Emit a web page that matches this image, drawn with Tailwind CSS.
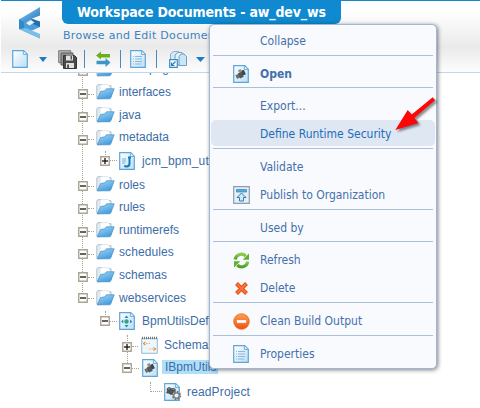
<!DOCTYPE html>
<html lang="en">
<head>
<meta charset="utf-8">
<title>Workspace Documents</title>
<script src="https://cdn.jsdelivr.net/npm/@tailwindcss/browser@4"></script>
</head>
<body class="bg-white">
<svg width="0" height="0" class="absolute">
  <defs>
    <linearGradient id="paper" x1="0" y1="0" x2="1" y2="1"><stop offset="0" stop-color="#fff"/><stop offset="1" stop-color="#b9dff5"/></linearGradient>
    <linearGradient id="fold" x1="0" y1="0" x2="0.6" y2="1"><stop offset="0" stop-color="#a5d8f7"/><stop offset="1" stop-color="#439cdc"/></linearGradient>
    <linearGradient id="blue" x1="0" y1="0" x2="1" y2="1"><stop offset="0" stop-color="#8fd0f5"/><stop offset="1" stop-color="#2275bb"/></linearGradient>
    <linearGradient id="orange" x1="0" y1="0" x2="0" y2="1"><stop offset="0" stop-color="#ffa04d"/><stop offset="1" stop-color="#ef4f0d"/></linearGradient>
    <linearGradient id="green" x1="0" y1="0" x2="0" y2="1"><stop offset="0" stop-color="#8dcc4d"/><stop offset="1" stop-color="#4c9f27"/></linearGradient>
    <symbol id="page" viewBox="0 0 16 18"><path d="M.7.7h11l3.6 3.6v13H.7z" fill="url(#paper)" stroke="#5fa5d6" stroke-width="1.2"/><path d="M11.4 1v3.5H15" fill="#d8effb" stroke="#69abd9" stroke-width=".9"/></symbol>
    <symbol id="textpage" viewBox="0 0 16 18"><use href="#page"/><path d="M3 6.5h1M5 6.5h7M3 9h1M5 9h7M3 11.5h1M5 11.5h7M3 14h1M5 14h6" stroke="#8ab9da" stroke-width="1"/></symbol>
    <symbol id="cubes" viewBox="0 0 14 11"><path d="M4 0l4 1.5v4L4 7 1 5V2zM10 1l3.5 1.8v3.4L11 8 8 6.5v-4zM6.500 5l3.500 1.500v3L7 11 3.500 9V7zM1.500 5.500L4 7v2L1.500 9 0 7.500z" fill="#4d5357"/><path d="M4 1.500l2 1-2 1-1.500-1zM10.500 2.500l1.500.7-1.500 1-1.500-1z" fill="#a3abb0"/></symbol>
    <symbol id="service" viewBox="0 0 16 18"><use href="#page"/><g transform="rotate(-25 7.500 9.500)"><rect x="2.500" y="8" width="5" height="4" fill="#6b7073"/><rect x="8" y="6.500" width="4.500" height="5" fill="#3f4447"/><rect x="5.500" y="7.500" width="4" height="5.500" fill="#53585b"/><rect x="7" y="4.500" width="3" height="3" fill="#8c9295"/></g></symbol>
    <symbol id="folder" viewBox="0 0 19 16"><path d="M.8 2l1-1.300h4l1.200 1h8v11l-13 2.300-1.200-1z" fill="#e6edf2" stroke="#9bb2c2" stroke-width=".8"/><path d="M4 .8l8-.3 2 2v6H4z" fill="#fff" stroke="#c3cfd7" stroke-width=".5"/><path d="M1.200 14.800L4.600 7.500l4.200-.7 1.600-2h7.800l-3.400 9q-.4 1-1.500 1z" fill="url(#fold)" stroke="#3a8fcb" stroke-width=".7"/></symbol>
    <symbol id="minus" viewBox="0 0 10 10"><path d="M.75.75h8.500v8.500H.75z" fill="#fff" stroke="#aca592" stroke-width="1.400"/><path d="M2 5h6" stroke="#111" stroke-width="1.300"/></symbol>
    <symbol id="plus" viewBox="0 0 10 10"><use href="#minus"/><path d="M5 2v6" stroke="#111" stroke-width="1.300"/></symbol>
  </defs>
</svg>
<div class="relative h-[408px] w-[480px] overflow-hidden bg-white font-['Liberation_Sans',Arial,sans-serif] text-[12px] text-[#3c6da8]">

  <header class="relative z-10 ml-px flex h-[73px] border-t border-b border-t-[#1686cc] border-b-[#c2d7e9] bg-linear-to-b from-white from-15% via-[#eaeaea] via-65% to-[#fdfdfd]">
    <div class="absolute top-[5px] left-[17px]">
      <svg width="24" height="34" viewBox="0 0 24 34"><path d="M22 1v8.500l-9 3.500-4 3H1v-2.500z" fill="url(#blue)"/><path d="M1 13.500L9 16l4-3.500 9 3.500v5l-9 4 9 4v3.500L1 23z" fill="#4b9fd8"/><path d="M1 13.500l5 2.500v6.500l3 2.500-8-2z" fill="#3388c8"/><path d="M13 12.500l9 3v5.500l-8-3.500z" fill="#256fae"/><path d="M1 23l7-1 14 6v4.500z" fill="#78bee9"/><path d="M8 17l5-3 3.500 2.500-5 3z" fill="#e8f5fc"/></svg>
    </div>
    <div class="flex w-full flex-col">
      <div class="ml-[61px] flex h-[23px] w-[279px] items-center rounded-b-[6px] bg-[#0f89cf] pl-[15px] font-['DejaVu_Sans_Condensed','DejaVu_Sans',sans-serif] text-[14px] font-bold whitespace-nowrap text-white"><span class="tracking-[-0.15px]">Workspace Documents - aw_dev_ws</span></div>
      <div class="ml-[62px] flex h-[23px] items-center pt-px font-['DejaVu_Sans',Verdana,sans-serif] text-[11px] tracking-[0.3px] whitespace-nowrap text-[#3e81c0]">Browse and Edit Documents</div>
      <div class="flex h-[24px] items-center pl-[11px]">
        <svg width="16" height="18"><use href="#page"/></svg>
        <svg class="ml-[11px]" width="8" height="5"><path d="M0 0h8L4 5z" fill="#187dc4"/></svg>
        <svg class="ml-[11px]" width="19" height="19" viewBox="0 0 19 19"><path d="M.7.700h12v12h-12z" fill="#b8b8b8" stroke="#777"/><path d="M3 3h12v12H3z" fill="#929292" stroke="#5d5d5d"/><path d="M5.500 5.500h11l2 2v11h-13z" fill="#4b4b4b" stroke="#353535"/><path d="M8 5.500h7v5H8zM8 13h8v5H8z" fill="#e1e1e1"/><path d="M12.500 6h1.500v3.500h-1.500zM9 14.500h2v3.500H9z" fill="#555"/></svg>
        <i class="ml-[7px] h-[18px] w-px bg-[#4d87bb]"></i>
        <svg class="ml-[11px]" width="15" height="16" viewBox="0 0 15 16"><path d="M0 4.500L5 .5v2.500h9v3.500H5v2z" fill="#6bb01c"/><path d="M14.500 11.500L9.500 7v2.700H.500v3.500h9V16z" fill="#3d96c8"/></svg>
        <i class="ml-[9px] h-[18px] w-px bg-[#4d87bb]"></i>
        <svg class="ml-[9px]" width="16" height="18"><use href="#textpage"/></svg>
        <i class="ml-[10px] h-[18px] w-px bg-[#4d87bb]"></i>
        <svg class="ml-[12px]" width="18" height="18" viewBox="0 0 18 18"><path d="M1.500 11V4l3-2.500h5V11z" fill="#d9eaf4" stroke="#7fb0cf"/><path d="M6 15V5l3-2.500h4l2 2V15z" fill="#e5f2fa" stroke="#6aa0c2"/><path d="M10 15.500V6.500L12 4h3l2.500 2.500v9z" fill="#cae5f5" stroke="#6aa0c2"/><path d="M.7 9.700h7.600v7.600H.7z" fill="#fff" stroke="#3b8dc1" stroke-width="1.200"/><path d="M6.500 11.500l-4 4M2.500 12.500v3h3" fill="none" stroke="#2581bd" stroke-width="1.200"/></svg>
        <svg class="ml-[9px]" width="9" height="5"><path d="M0 0h9L4.500 5z" fill="#187dc4"/></svg>
      </div>
    </div>
  </header>

  <main class="relative -mt-[15px] whitespace-nowrap">
    <i class="absolute top-0 left-[82px] h-[238px] border-l border-dotted border-[#a9a292]"></i>
    <i class="absolute top-[93px] left-[105px] h-[10px] border-l border-dotted border-[#a9a292]"></i>
    <i class="absolute top-[253px] left-[105px] h-[10px] border-l border-dotted border-[#a9a292]"></i>
    <i class="absolute top-[277px] left-[127px] h-[30px] border-l border-dotted border-[#a9a292]"></i>
    <i class="absolute top-[324px] left-[150px] h-[10px] border-l border-dotted border-[#a9a292]"></i>
    <div class="relative">
      <div class="flex h-[22.8px] items-center pl-[78px]"><svg width="10" height="10" class="translate-y-[2px]"><use href="#minus"/></svg><i class="mr-[2px] w-[6px] translate-y-[2px] border-t border-dotted border-[#a9a292]"></i><svg width="19" height="16"><use href="#folder"/></svg><span class="ml-[4px] -translate-y-px">homepage</span></div>
      <div class="flex h-[22.8px] items-center pl-[78px]"><svg width="10" height="10" class="translate-y-[2px]"><use href="#minus"/></svg><i class="mr-[2px] w-[6px] translate-y-[2px] border-t border-dotted border-[#a9a292]"></i><svg width="19" height="16"><use href="#folder"/></svg><span class="ml-[4px]">interfaces</span></div>
      <div class="flex h-[22.8px] items-center pl-[78px]"><svg width="10" height="10" class="translate-y-[2px]"><use href="#minus"/></svg><i class="mr-[2px] w-[6px] translate-y-[2px] border-t border-dotted border-[#a9a292]"></i><svg width="19" height="16"><use href="#folder"/></svg><span class="ml-[4px]">java</span></div>
      <div class="flex h-[22.8px] items-center pl-[78px]"><svg width="10" height="10" class="translate-y-[2px]"><use href="#minus"/></svg><i class="mr-[2px] w-[6px] translate-y-[2px] border-t border-dotted border-[#a9a292]"></i><svg width="19" height="16"><use href="#folder"/></svg><span class="ml-[4px] -translate-y-px">metadata</span></div>
      <div class="flex h-[23.5px] items-center pl-[100px]"><svg width="10" height="10"><use href="#plus"/></svg><i class="mr-[2px] w-[7px] border-t border-dotted border-[#a9a292]"></i><svg width="16" height="18" viewBox="0 0 16 18"><use href="#page"/><path d="M9 5.500h3M10.500 5.500v6q0 3-3 3-1.500 0-2-1" fill="none" stroke="#1878b8" stroke-width="2"/><path d="M3 7h4M3 9h4M3 11h3" stroke="#71b4de"/></svg><span class="ml-[7px] tracking-[0.15px]">jcm_bpm_util</span></div>
      <div class="flex h-[22.8px] items-center pl-[78px]"><svg width="10" height="10" class="translate-y-[2px]"><use href="#minus"/></svg><i class="mr-[2px] w-[6px] translate-y-[2px] border-t border-dotted border-[#a9a292]"></i><svg width="19" height="16"><use href="#folder"/></svg><span class="ml-[4px] translate-y-px">roles</span></div>
      <div class="flex h-[22.8px] items-center pl-[78px]"><svg width="10" height="10" class="translate-y-[2px]"><use href="#minus"/></svg><i class="mr-[2px] w-[6px] translate-y-[2px] border-t border-dotted border-[#a9a292]"></i><svg width="19" height="16"><use href="#folder"/></svg><span class="ml-[4px]">rules</span></div>
      <div class="flex h-[22.8px] items-center pl-[78px]"><svg width="10" height="10" class="translate-y-[2px]"><use href="#minus"/></svg><i class="mr-[2px] w-[6px] translate-y-[2px] border-t border-dotted border-[#a9a292]"></i><svg width="19" height="16"><use href="#folder"/></svg><span class="ml-[4px]">runtimerefs</span></div>
      <div class="flex h-[22.8px] items-center pl-[78px]"><svg width="10" height="10" class="translate-y-[2px]"><use href="#minus"/></svg><i class="mr-[2px] w-[6px] translate-y-[2px] border-t border-dotted border-[#a9a292]"></i><svg width="19" height="16"><use href="#folder"/></svg><span class="ml-[4px] tracking-[0.1px]">schedules</span></div>
      <div class="flex h-[22.8px] items-center pl-[78px]"><svg width="10" height="10" class="translate-y-[2px]"><use href="#minus"/></svg><i class="mr-[2px] w-[6px] translate-y-[2px] border-t border-dotted border-[#a9a292]"></i><svg width="19" height="16"><use href="#folder"/></svg><span class="ml-[4px]">schemas</span></div>
      <div class="flex h-[22.8px] items-center pl-[78px]"><svg width="10" height="10"><use href="#minus"/></svg><i class="mr-[2px] w-[6px] border-t border-dotted border-[#a9a292]"></i><svg width="19" height="16"><use href="#folder"/></svg><span class="ml-[4px] tracking-[0.1px]">webservices</span></div>
      <div class="flex h-[23.5px] items-center pl-[100px]"><svg width="10" height="10"><use href="#minus"/></svg><i class="mr-[2px] w-[7px] border-t border-dotted border-[#a9a292]"></i><svg width="16" height="18" viewBox="0 0 16 18"><use href="#page"/><circle cx="7.500" cy="9.500" r="2.200" fill="#39a27c"/><path d="M7.500 3.500L9.500 6h-4zM7.500 15.500L9.500 13h-4zM2 9.500L4.300 7.500v4zM13.200 9.500L11 7.500v4z" fill="#2987c9"/></svg><span class="ml-[7px]">BpmUtilsDefinition</span></div>
      <div class="flex h-[23.5px] items-center pl-[122px]"><svg width="10" height="10" class="translate-y-[2px]"><use href="#plus"/></svg><i class="mr-[3px] w-[6px] translate-y-[2px] border-t border-dotted border-[#a9a292]"></i><svg width="17" height="18" viewBox="0 0 17 18"><path d="M.7 2.500h15.600v14.800H.7z" fill="#edf6fb" stroke="#8fbcd9"/><path d="M1 2h15" stroke="#73777a" stroke-width="2.500" stroke-dasharray="1 1"/><path d="M4.500 6L2.500 7.500l2 1.500M12.500 11.500l2 1.500-2 1.500" fill="none" stroke="#f08b35" stroke-width="1.100"/><path d="M5 7.500h4M8 13h4" stroke="#f3ac71" stroke-dasharray="1.500 1"/></svg><span class="ml-[6px] tracking-[0.1px]">Schemas</span></div>
      <div class="flex h-[23.500px] items-center pl-[122px]"><svg width="10" height="10"><use href="#minus"/></svg><i class="mr-[3px] w-[7px] border-t border-dotted border-[#a9a292]"></i><svg width="16" height="18"><use href="#service"/></svg><span class="ml-[4px] -translate-y-px bg-[#b0dffa] py-px pr-[2px] pl-[3px] leading-[12px]">IBpmUtils</span></div>
      <div class="flex h-[23.500px] items-center pl-[150px]"><i class="mr-[2px] w-[12px] border-t border-dotted border-[#a9a292]"></i><svg width="18" height="18" viewBox="0 0 18 18"><use href="#page" width="16" height="18"/><use href="#cubes" x="2" y="4" width="10" height="8"/><circle cx="12.500" cy="12.500" r="3.600" fill="#d0d3d5" stroke="#75797c" stroke-width="2.200" stroke-dasharray="1.700 1.100"/><circle cx="12.500" cy="12.500" r="2.700" fill="#eee" stroke="#777b7e" stroke-width="1.200"/></svg><span class="ml-[5px] tracking-[0.15px]">readProject</span></div>
    </div>
  </main>

  <nav class="absolute top-[24px] left-[209px] z-20 flex h-[345px] w-[228px] flex-col rounded-[5px] border border-[#9db7d8] bg-[#f8fafd] pt-[2px] font-['DejaVu_Sans_Condensed','DejaVu_Sans',sans-serif] text-[12px] whitespace-nowrap text-[#4470ab] shadow-[1px_1px_4px_rgba(0,0,0,0.5)]">
    <div class="flex h-[28px] items-center pl-[50px]">Collapse</div>
    <div class="mx-[3px] h-[32px] border-t border-[#a9bfdc] pt-[4px]">
      <div class="flex h-[27px] items-center pl-[20px] font-bold"><svg width="16" height="18"><use href="#service"/></svg><span class="ml-[11px]">Open</span></div>
    </div>
    <div class="mx-[3px] h-[61px] border-t border-[#a9bfdc] pt-[4px]">
      <div class="flex h-[28px] items-center pl-[47px]">Export...</div>
      <div class="-mx-[2px] flex h-[26px] items-center rounded-[5px] bg-[#dfe7f3] pt-px pl-[49px] text-[#1e6dba]">Define Runtime Security</div>
    </div>
    <div class="mx-[3px] h-[61px] border-t border-[#a9bfdc] pt-[4px]">
      <div class="flex h-[28px] items-center pl-[47px]">Validate</div>
      <div class="flex h-[28px] items-center pl-[20px]"><svg width="17" height="18" viewBox="0 0 17 18"><path d="M.7.700h15.600v16.600H.7z" fill="#e8eef3" stroke="#8b9eae" stroke-width="1.200"/><path d="M3.500 3.500h10v2.500h-10z" fill="#5aaddf" stroke="#3381b7" stroke-width=".7"/><path d="M8.500 7l4.500 4.500h-2.500V15h-4v-3.500H4z" fill="#cfe9f9" stroke="#2980bd"/></svg><span class="ml-[10px]">Publish to Organization</span></div>
    </div>
    <div class="mx-[3px] h-[32px] border-t border-[#a9bfdc] pt-[4px]">
      <div class="flex h-[28px] items-center pl-[47px]">Used by</div>
    </div>
    <div class="mx-[3px] h-[61px] border-t border-[#a9bfdc] pt-[4px]">
      <div class="flex h-[28px] items-center pl-[20px]"><svg width="17" height="17" viewBox="0 0 17 17"><g fill="none" stroke="url(#green)" stroke-width="3.200"><path d="M2.200 7.500A6.300 6.300 0 0 1 12.800 4"/><path d="M14.800 9.500A6.300 6.300 0 0 1 4.200 13"/></g><path d="M16 1.500v6.300H9.700zM1 15.500V9.200h6.300z" fill="#61b032"/></svg><span class="ml-[10px]">Refresh</span></div>
      <div class="flex h-[28px] items-center pl-[21px]"><svg width="15" height="15" viewBox="0 0 15 15"><path d="M2.500 2.500l10 10M12.500 2.500l-10 10" stroke="#e04a18" stroke-width="4"/><path d="M3 3l9 9M12 3l-9 9" stroke="#fb7434" stroke-width="2.400"/></svg><span class="ml-[11px]">Delete</span></div>
    </div>
    <div class="mx-[3px] h-[33px] border-t border-[#a9bfdc] pt-[4px]">
      <div class="flex h-[28px] items-center pl-[20px]"><svg width="17" height="17" viewBox="0 0 17 17"><circle cx="8.500" cy="8.500" r="7.800" fill="url(#orange)" stroke="#e46a20" stroke-width=".8"/><rect x="3.500" y="6.700" width="10" height="3.500" rx=".6" fill="#fff" stroke="#dc561d" stroke-width=".5"/></svg><span class="ml-[10px]">Clean Build Output</span></div>
    </div>
    <div class="mx-[3px] border-t border-[#a9bfdc] pt-[4px]">
      <div class="flex h-[27px] items-center pl-[20px]"><svg width="16" height="18"><use href="#textpage"/></svg><span class="ml-[11px]">Properties</span></div>
    </div>
  </nav>

  <svg class="absolute top-[94px] left-[392px] z-30 drop-shadow-[2px_2px_1px_rgba(0,0,0,0.45)]" width="48" height="40" viewBox="0 0 48 40"><path d="M3.300 36L15.700 16l4 4.500L40.700 3.300l2.400 3L22.300 24l4.200 5z" fill="#fb0707"/></svg>
</div>
</body>
</html>
